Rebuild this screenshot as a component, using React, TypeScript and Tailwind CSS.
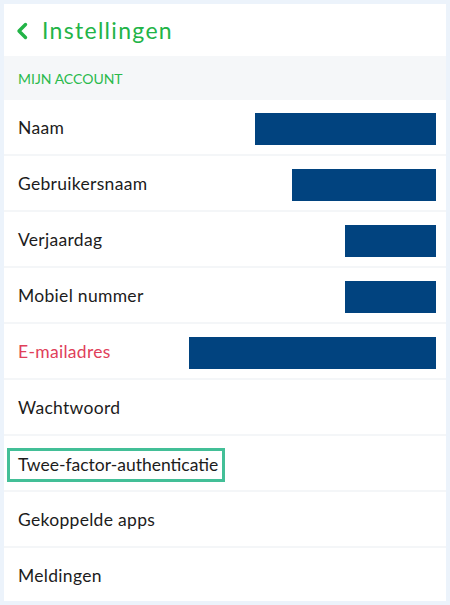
import React from "react";

type Row = { label: string; bar?: number; red?: boolean; boxed?: boolean };

const rows: Row[] = [
  { label: "Naam", bar: 181 },
  { label: "Gebruikersnaam", bar: 144 },
  { label: "Verjaardag", bar: 91 },
  { label: "Mobiel nummer", bar: 91 },
  { label: "E-mailadres", bar: 247, red: true },
  { label: "Wachtwoord" },
  { label: "Twee-factor-authenticatie", boxed: true },
  { label: "Gekoppelde apps" },
  { label: "Meldingen" },
];

export default function App() {
  return (
    <div
      className="w-[450px] h-[605px] bg-[#ecf3fb] p-1 overflow-hidden"
      style={{ fontFamily: "Lato, 'Open Sans', sans-serif" }}
    >
      <div className="w-full h-full bg-white flex flex-col overflow-hidden">
        <div className="h-[52px] shrink-0 flex items-center pl-3 gap-[14px] text-[#22b447]">
          <svg width="12" height="18" viewBox="0 0 12 18" className="mt-[1px]">
            <polyline
              points="9.5,2.5 3,9 9.5,15.5"
              fill="none"
              stroke="#22b447"
              strokeWidth="3.4"
              strokeLinecap="round"
              strokeLinejoin="round"
            />
          </svg>
          <span className="text-[23px] leading-none tracking-[1.3px]">Instellingen</span>
        </div>
        <div className="h-[44px] shrink-0 bg-[#f5f7f9] flex items-center pl-[14px] text-[14px] text-[#2aba4c] uppercase">
          Mijn account
        </div>
        {rows.map((r) => (
          <div
            key={r.label}
            className="h-[56px] shrink-0 flex items-center justify-between border-b-2 border-[#f4f6f8] pl-[14px] pr-[10px]"
          >
            {r.boxed ? (
              <span className="-ml-[11px] mt-[4px] border-[3px] border-[#43bf97] pl-2 pr-[4px] h-[34px] flex items-center text-[17.5px] text-[#1c1c1c]">
                <span className="mt-[1px]">{r.label}</span>
              </span>
            ) : (
              <span
                className={`mt-[3px] text-[17.5px] tracking-[0.3px] ${r.red ? "text-[#e0405a]" : "text-[#1c1c1c]"}`}
              >
                {r.label}
              </span>
            )}
            {r.bar ? <div className="h-[32px] mt-[4px] bg-[#01437f]" style={{ width: r.bar }} /> : null}
          </div>
        ))}
      </div>
    </div>
  );
}
